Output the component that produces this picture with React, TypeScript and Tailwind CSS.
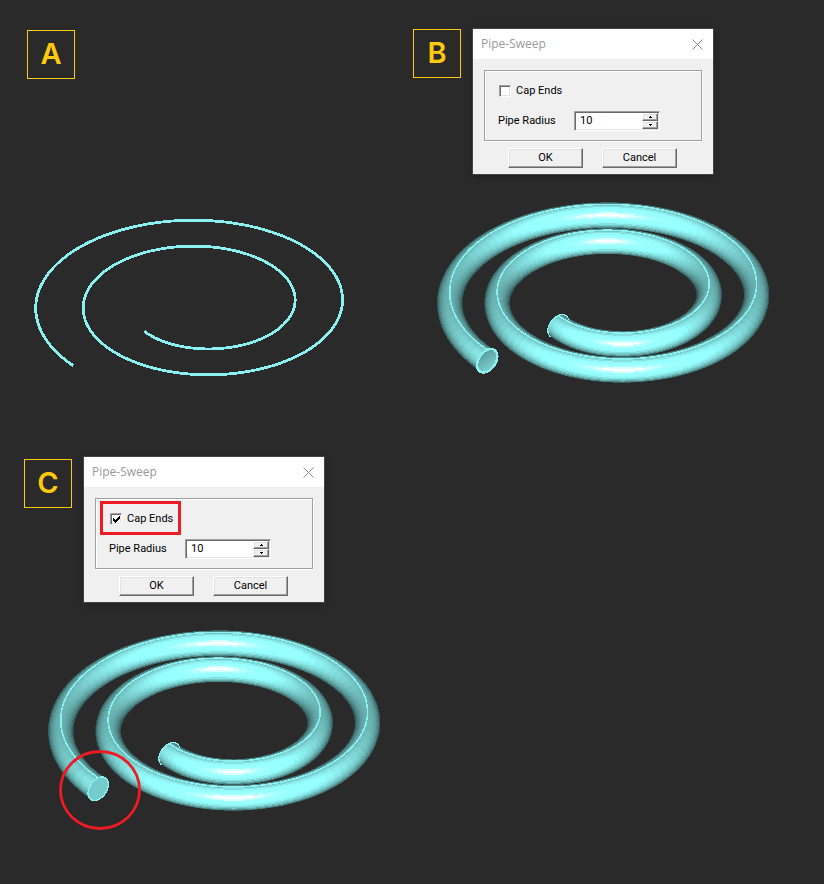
import { useId, useState } from "react";

const TILT = 0.546;
const DEPTH = Math.sqrt(1 - TILT * TILT);
const TUBE = 13;
const PITCH = 47.5 / (2 * Math.PI);
const START = (138.5 * Math.PI) / 180;
const END = START + 4 * Math.PI;
const START_RADIUS = 170.6;

type Point = [number, number];

const fmt = (points: Point[]) =>
  points.map(([x, y]) => `${x.toFixed(2)},${y.toFixed(2)}`).join(" ");

function centre(t: number): Point {
  const r = START_RADIUS - PITCH * (t - START);
  return [r * Math.cos(t), r * Math.sin(t) * TILT];
}

/** Outward normal of the sweep path, in the plane of the spiral. */
function outward(t: number): Point {
  const r = START_RADIUS - PITCH * (t - START);
  const tx = -r * Math.sin(t) - PITCH * Math.cos(t);
  const ty = r * Math.cos(t) - PITCH * Math.sin(t);
  const len = Math.hypot(tx, ty);
  return [ty / len, -tx / len];
}

/** Screen position and facing of the tube's skin at angle `a` round the ring. */
function skin(t: number, a: number) {
  const [cx, cy] = centre(t);
  const [nx, ny] = outward(t);
  const x = Math.cos(a) * nx;
  const y = Math.cos(a) * ny * TILT - Math.sin(a) * DEPTH;
  const facing = Math.cos(a) * ny * DEPTH + Math.sin(a) * TILT;
  return { p: [cx + x * TUBE, cy + y * TUBE] as Point, facing };
}

function shade(facing: number) {
  const f = Math.max(0, Math.min(1, facing));
  const light = Math.min(255, 42 + 250 * f);
  const gloss = 130 * Math.pow(f, 55);
  const red = Math.min(255, Math.round(light * 0.59 + gloss));
  return `rgb(${red},${Math.round(light)},${Math.round(light)})`;
}

const samples = (from: number, to: number, count: number) =>
  Array.from({ length: count + 1 }, (_, i) => from + ((to - from) * i) / count);

const wire = fmt(samples(START, END, 240).map(centre));
const seam = fmt(samples(START, END, 240).map((t) => skin(t, Math.PI / 2).p));
const ring = (t: number) =>
  fmt(samples(0, 2 * Math.PI, 40).map((a) => skin(t, a).p));

function middle(t: number) {
  return Math.atan2(TILT, outward(t)[1] * DEPTH);
}

const STRIPS = 21;
const quads = (() => {
  const rings = samples(START, END, 180);
  const out: { points: string; fill: string }[] = [];
  for (let i = 0; i < rings.length - 1; i++) {
    const t0 = rings[i];
    const t1 = rings[i + 1];
    for (let j = 0; j < STRIPS; j++) {
      const u0 = -Math.PI / 2 + (Math.PI * j) / STRIPS;
      const u1 = u0 + Math.PI / STRIPS;
      const tm = (t0 + t1) / 2;
      out.push({
        points: fmt([
          skin(t0, middle(t0) + u0).p,
          skin(t0, middle(t0) + u1).p,
          skin(t1, middle(t1) + u1).p,
          skin(t1, middle(t1) + u0).p,
        ]),
        fill: shade(skin(tm, middle(tm) + (u0 + u1) / 2).facing),
      });
    }
  }
  return out;
})();

const farEdge = fmt(
  samples(middle(END) - Math.PI / 2, middle(END) + Math.PI / 2 + 0.5, 24).map(
    (a) => skin(END, a).p,
  ),
);

function Wire() {
  return (
    <svg className="block h-[230px] w-[380px]" viewBox="0 0 380 230" role="img" aria-label="Spiral curve">
      <polyline
        points={wire}
        transform="translate(177 130)"
        fill="none"
        stroke="#8cf0f0"
        strokeWidth="2.8"
        shapeRendering="crispEdges"
      />
    </svg>
  );
}

function Pipe({ capped = false }: { capped?: boolean }) {
  const gradient = useId();
  return (
    <svg
      className="block h-[230px] w-[380px]"
      viewBox="0 0 380 230"
      role="img"
      aria-label={capped ? "Spiral pipe, ends capped" : "Spiral pipe, ends open"}
    >
      <defs>
        <linearGradient id={gradient} x1="0" y1="0" x2="0.6" y2="1">
          <stop offset="0" stopColor="#4e8989" />
          <stop offset="1" stopColor="#7fd6d6" />
        </linearGradient>
      </defs>
      <g transform="translate(202 125)">
        <g shapeRendering="crispEdges">
          {quads.map((q, i) => (
            <polygon key={i} points={q.points} fill={q.fill} />
          ))}
        </g>
        <g stroke="#8cf0f0" fill="none" shapeRendering="crispEdges">
          <polyline points={seam} strokeWidth="1.6" />
          <polyline points={farEdge} strokeWidth="1.2" />
          <polygon
            points={ring(START)}
            fill={capped ? "#76cccc" : `url(#${gradient})`}
            strokeWidth={capped ? 1.4 : 2.4}
          />
        </g>
      </g>
      {capped && <ellipse cx="76" cy="188" rx="39.5" ry="38.5" fill="none" stroke="#ed1c24" strokeWidth="2.8" />}
    </svg>
  );
}

function Badge({ children }: { children: string }) {
  return (
    <h2 className="flex h-[49px] w-12 shrink-0 items-center justify-center border border-[#ffc90e] pb-0.5 font-['Inter',sans-serif] text-[29px] leading-8 font-semibold text-[#ffc90e]">
      {children}
    </h2>
  );
}

const raised =
  "border border-t-white border-l-white border-r-[#696969] border-b-[#696969] bg-[#f0f0f0] shadow-[inset_-1px_-1px_0_#a0a0a0,inset_1px_1px_0_#e3e3e3]";

function SpinButton({ label, up, onClick }: { label: string; up?: boolean; onClick: () => void }) {
  return (
    <button type="button" aria-label={label} onClick={onClick} className={`flex flex-1 items-center justify-center ${raised}`}>
      <svg className="h-0.5 w-[3px]" viewBox="0 0 3 2" fill="#000" shapeRendering="crispEdges">
        <path d={up ? "M1 0h1v1h1v1H0V1h1z" : "M0 0h3v1H2v1H1V1H0z"} />
      </svg>
    </button>
  );
}

function Dialog({ capped = false }: { capped?: boolean }) {
  const id = useId();
  const [cap, setCap] = useState(capped);
  const [radius, setRadius] = useState(10);
  return (
    <form
      aria-label="Pipe-Sweep"
      onSubmit={(e) => e.preventDefault()}
      className="w-60 bg-[#f0f0f0] pb-1.5 font-['Roboto',sans-serif] text-[11px] leading-4 text-black shadow-[0_0_0_1px_#444,0_2px_8px_rgba(0,0,0,0.3)]"
    >
      <header className="flex h-[30px] items-center justify-between bg-white px-2 font-['Open_Sans',sans-serif] text-xs text-[#999]">
        <h3>Pipe-Sweep</h3>
        <button type="button" aria-label="Close" className="p-0.5">
          <svg className="h-[11px] w-[11px]" viewBox="0 0 11 11" stroke="#8c8c8c" strokeWidth="1" fill="none">
            <path d="M.5.5l10 10M10.5.5l-10 10" />
          </svg>
        </button>
      </header>
      <div className="mx-[11px] mt-[11px] h-[71px] border border-[#a0a0a0] px-[13px] pt-3 shadow-[inset_1px_1px_0_#fff,1px_1px_0_#fff]">
        <div className="relative ml-px flex w-fit items-center gap-[5px]">
          <span className="relative flex h-3 w-3">
            <input
              id={`${id}-cap`}
              type="checkbox"
              checked={cap}
              onChange={(e) => setCap(e.target.checked)}
              className="h-3 w-3 appearance-none border border-t-[#a0a0a0] border-r-white border-b-white border-l-[#a0a0a0] bg-white shadow-[inset_1px_1px_0_#696969,inset_-1px_-1px_0_#e3e3e3]"
            />
            {cap && (
              <svg className="pointer-events-none absolute top-[3px] left-[3px] h-[7px] w-[7px]" viewBox="0 0 7 7" shapeRendering="crispEdges">
                <path d="M0 2h1v1h1v1h1V3h1V2h1V1h1V0h1v3H6v1H5v1H4v1H3v1H2V6H1V5H0z" />
              </svg>
            )}
          </span>
          <label htmlFor={`${id}-cap`}>Cap Ends</label>
          {capped && (
            <span className="pointer-events-none absolute -top-2.5 -right-2 -bottom-2 -left-2.5 border-3 border-[#ed1c24]" />
          )}
        </div>
        <div className="mt-3 flex items-center">
          <label htmlFor={`${id}-radius`} className="w-[76px]">
            Pipe Radius
          </label>
          <div className="flex h-5 w-[86px] border border-t-[#a0a0a0] border-r-white border-b-white border-l-[#a0a0a0] bg-white p-px shadow-[inset_1px_1px_0_#696969,inset_-1px_-1px_0_#e3e3e3]">
            <input
              id={`${id}-radius`}
              type="text"
              inputMode="numeric"
              value={radius}
              onChange={(e) => setRadius(Number(e.target.value) || 0)}
              className="w-full min-w-0 flex-1 bg-transparent pl-1 outline-none"
            />
            <div className="flex w-4 flex-col">
              <SpinButton label="Increase radius" up onClick={() => setRadius(radius + 1)} />
              <SpinButton label="Decrease radius" onClick={() => setRadius(radius - 1)} />
            </div>
          </div>
        </div>
      </div>
      <div className="mt-[7px] flex gap-[19px] pl-[35px]">
        <button type="submit" className={`h-5 w-[75px] ${raised}`}>
          OK
        </button>
        <button type="button" className={`h-5 w-[75px] ${raised}`}>
          Cancel
        </button>
      </div>
    </form>
  );
}

export default function App() {
  return (
    <main className="grid min-h-screen grid-cols-[389px_1fr] grid-rows-[auto_1fr] gap-y-[53px] bg-[#2a2a2a] pt-[29px] pl-6">
      <section>
        <div className="h-[145px] pt-px pl-[3px]">
          <Badge>A</Badge>
        </div>
        <Wire />
      </section>
      <section>
        <div className="flex gap-3">
          <Badge>B</Badge>
          <Dialog />
        </div>
        <Pipe />
      </section>
      <section>
        <div className="flex gap-3">
          <div className="pt-0.5">
            <Badge>C</Badge>
          </div>
          <Dialog capped />
        </div>
        <Pipe capped />
      </section>
    </main>
  );
}
